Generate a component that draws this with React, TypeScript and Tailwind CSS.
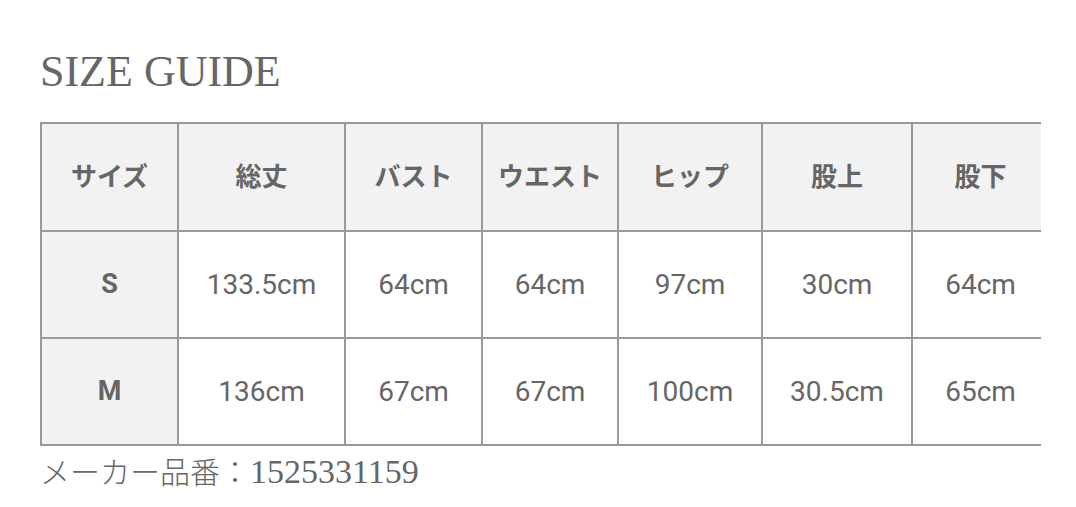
const HEADERS = ["サイズ", "総丈", "バスト", "ウエスト", "ヒップ", "股上", "股下"];

const ROWS = [
  ["S", "133.5cm", "64cm", "64cm", "97cm", "30cm", "64cm"],
  ["M", "136cm", "67cm", "67cm", "100cm", "30.5cm", "65cm"],
];

const sans = "font-['Roboto','Noto_Sans_CJK_JP',sans-serif]";

export default function App() {
  return (
    <div className="min-h-[507px] w-[1076px] bg-white pl-[40px] pt-[50px] text-[#666]">
      <h2 className="font-['Liberation_Serif',serif] text-[44px] leading-none text-[#666]">
        SIZE GUIDE
      </h2>

      <div className="mt-[28px] w-[1001px] overflow-hidden">
        <div
          className={`grid w-[1010px] grid-cols-[137px_167px_137px_136px_144px_150px_137px] border-l-2 border-t-2 border-[#999] ${sans}`}
        >
          {HEADERS.map((h) => (
            <div
              key={h}
              className="flex h-[108px] items-center justify-center border-b-2 border-r-2 border-[#999] bg-[#f2f2f2] text-[26px] font-bold text-[#666]"
            >
              {h}
            </div>
          ))}
          {ROWS.map((row) =>
            row.map((cell, i) => (
              <div
                key={row[0] + i}
                className={
                  i === 0
                    ? "flex h-[107px] items-center justify-center border-b-2 border-r-2 border-[#999] bg-[#f2f2f2] text-[27px] font-bold text-[#666]"
                    : "flex h-[107px] items-center justify-center border-b-2 border-r-2 border-[#999] bg-white text-[28px] text-[#666]"
                }
              >
                {cell}
              </div>
            ))
          )}
        </div>
      </div>

      <p className="mt-[4px] flex items-baseline text-[#666]">
        <span className="font-['Noto_Sans_CJK_JP',sans-serif] text-[30px] font-light leading-[40px]">
          メーカー品番：
        </span>
        <span className="font-['Liberation_Serif',serif] text-[34px] leading-[40px]">
          1525331159
        </span>
      </p>
    </div>
  );
}
